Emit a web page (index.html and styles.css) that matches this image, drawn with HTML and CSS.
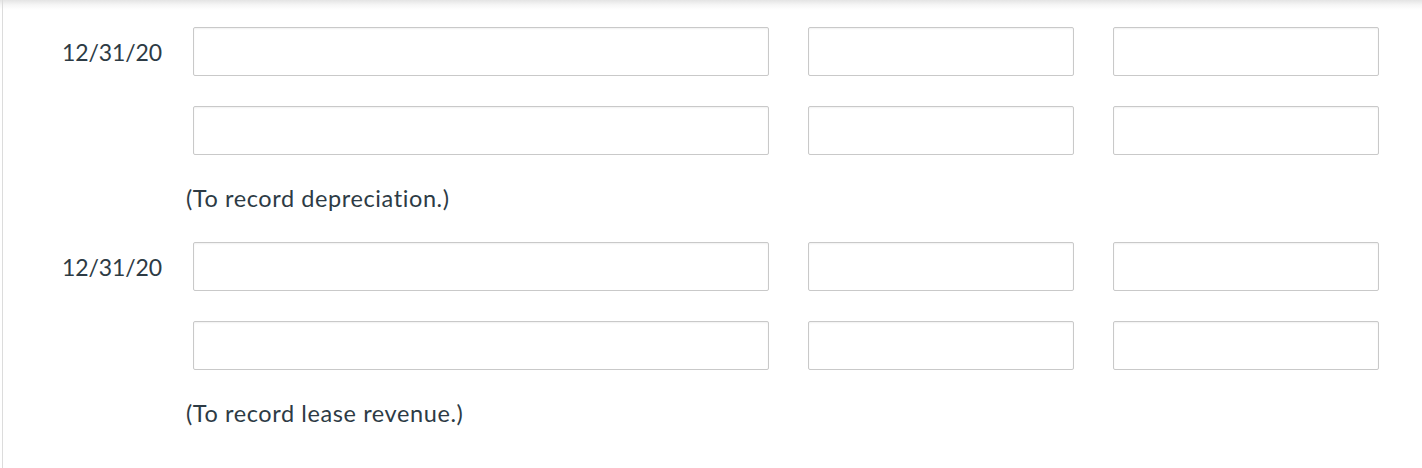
FILE: index.html
```html
<!DOCTYPE html>
<html lang="en">
<head>
<meta charset="utf-8">
<title>Journal entries</title>
<link rel="stylesheet" href="styles.css">
</head>
<body>
<div class="page">
  <div class="entry">
    <div class="row">
      <div class="date">12/31/20</div>
      <div class="fields">
        <input class="field account" type="text">
        <input class="field amount" type="text">
        <input class="field amount" type="text">
      </div>
    </div>
    <div class="row">
      <div class="date"></div>
      <div class="fields">
        <input class="field account" type="text">
        <input class="field amount" type="text">
        <input class="field amount" type="text">
      </div>
    </div>
    <div class="note">(To record depreciation.)</div>
  </div>
  <div class="entry">
    <div class="row">
      <div class="date">12/31/20</div>
      <div class="fields">
        <input class="field account" type="text">
        <input class="field amount" type="text">
        <input class="field amount" type="text">
      </div>
    </div>
    <div class="row">
      <div class="date"></div>
      <div class="fields">
        <input class="field account" type="text">
        <input class="field amount" type="text">
        <input class="field amount" type="text">
      </div>
    </div>
    <div class="note">(To record lease revenue.)</div>
  </div>
</div>
</body>
</html>
```

FILE: styles.css
```css
html, body {
  margin: 0;
  padding: 0;
  background: #fff;
}
body {
  font-family: Lato, "Open Sans", "Liberation Sans", sans-serif;
  color: #2d3b45;
  height: 468px;
  overflow: hidden;
  background: linear-gradient(#e4e4e4 0, #f6f6f6 5px, #fff 10px);
}
.page {
  margin-left: 2px;
  border-left: 1px solid #dcdcdc;
  min-height: 468px;
  box-sizing: border-box;
  padding-top: 27px;
}
.entry {
  display: flex;
  flex-direction: column;
  gap: 30px;
}
.row {
  display: flex;
  align-items: center;
  height: 49px;
}
.date {
  width: 190px;
  box-sizing: border-box;
  padding-left: 59px;
  font-size: 23px;
  letter-spacing: -0.1px;
  line-height: 30px;
}
.fields {
  display: flex;
  gap: 39px;
}
.field {
  height: 49px;
  box-sizing: border-box;
  border: 1px solid #c9c9c9;
  border-radius: 2px;
  box-shadow: inset 0 1px 2px rgba(0, 0, 0, 0.06);
  background: #fff;
  margin: 0;
  padding: 0 10px;
  font: inherit;
}
.account { width: 576px; }
.amount { width: 266px; }
.note {
  margin-top: -4px;
  padding-left: 183px;
  font-size: 23.5px;
  letter-spacing: 0.6px;
  line-height: 34px;
  height: 61px;
}
```
